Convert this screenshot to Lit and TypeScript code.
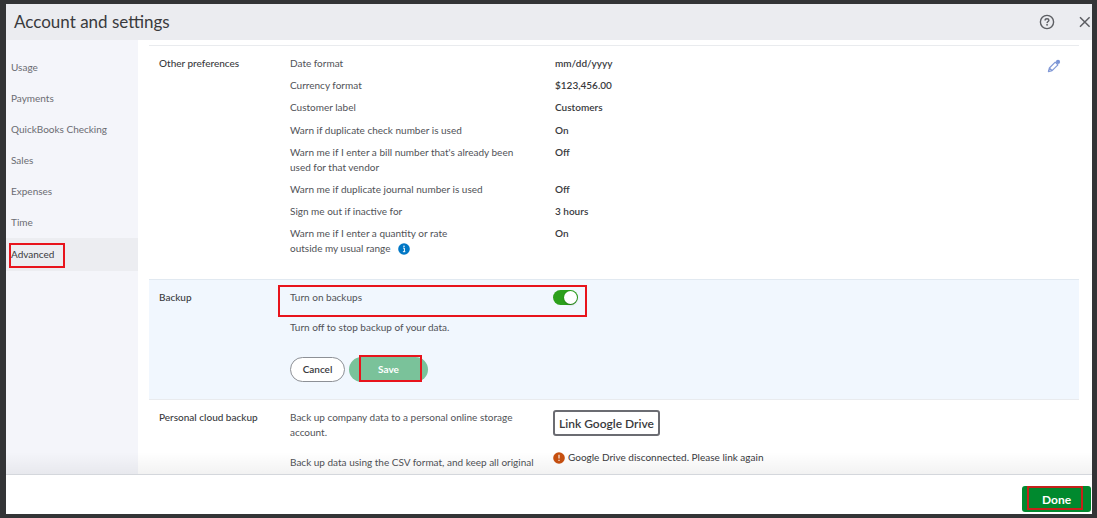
import { LitElement, html, css } from "lit";
import { customElement, property, state } from "lit/decorators.js";

interface Preference {
  label: string;
  value: string;
  narrow?: boolean;
  info?: boolean;
}

const formats: Preference[] = [
  { label: "Date format", value: "mm/dd/yyyy" },
  { label: "Currency format", value: "$123,456.00" },
  { label: "Customer label", value: "Customers" },
];

const warnings: Preference[] = [
  { label: "Warn if duplicate check number is used", value: "On" },
  { label: "Warn me if I enter a bill number that's already been used for that vendor", value: "Off" },
  { label: "Warn me if duplicate journal number is used", value: "Off" },
  { label: "Sign me out if inactive for", value: "3 hours" },
  { label: "Warn me if I enter a quantity or rate outside my usual range", value: "On", narrow: true, info: true },
];

const pages = ["Usage", "Payments", "QuickBooks Checking", "Sales", "Expenses", "Time", "Advanced"];

@customElement("settings-section")
export class SettingsSection extends LitElement {
  @property() heading = "";
  @property({ type: Boolean, reflect: true }) active = false;

  static styles = css`
    :host {
      display: grid;
      grid-template-columns: 131px minmax(0, 1fr);
      padding: 10px;
      border-top: 1px solid #e9ebee;
    }
    :host([active]) {
      background: #f1f7fe;
      border-color: #e1e9f1;
    }
    h2 {
      margin: 0;
      font-size: 10px;
      line-height: 15px;
      font-weight: 500;
      color: #393a3d;
    }
  `;

  render() {
    return html`<h2>${this.heading}</h2><div><slot></slot></div>`;
  }
}

@customElement("app-root")
export class AppRoot extends LitElement {
  @state() private current = "Advanced";
  @state() private backups = true;

  static styles = css`
    :host {
      display: flex;
      flex-direction: column;
      box-sizing: border-box;
      height: 100vh;
      border: solid #333436;
      border-width: 4px 5px 4px 6px;
      background: #fff;
      color: #505257;
      font: 10px/15px Lato, "Liberation Sans", sans-serif;
      overflow: hidden;
    }
    button {
      font: inherit;
      cursor: pointer;
      padding: 0;
      border: 0;
      background: none;
      color: inherit;
    }
    svg {
      display: block;
    }
    header {
      display: flex;
      align-items: center;
      flex: none;
      height: 36px;
      padding: 0 1px 0 8px;
      background: #ebecf0;
      color: #393a3d;
    }
    h1 {
      margin: 0 auto 0 0;
      font-size: 17px;
      line-height: 24px;
      font-weight: 400;
    }
    .tools {
      display: flex;
      gap: 24px;
      color: #5c5e63;
    }
    .body {
      display: flex;
      flex: 1;
      min-height: 0;
    }
    nav {
      flex: none;
      width: 132px;
      box-sizing: border-box;
      padding-top: 12px;
      background: #f4f5fa;
    }
    nav a {
      display: block;
      padding: 8px 5px;
      color: #6b6c72;
      text-decoration: none;
    }
    nav a.current {
      padding: 9px 5px;
      background: #ecedf1;
      color: #393a3d;
    }
    .marked {
      position: relative;
    }
    nav .marked {
      display: inline-block;
      vertical-align: top;
    }
    .mark {
      position: absolute;
      border: 2px solid #e8141c;
      pointer-events: none;
    }
    .mark-nav {
      inset: -4px -11px -6px -2px;
    }
    .mark-toggle {
      inset: -5px -9px -12px -12px;
    }
    .mark-save {
      inset: -2px 6px 0 10px;
    }
    .mark-done {
      inset: 0 8px 2px 5px;
      border-color: #c5221a;
    }
    main {
      flex: 1;
      min-width: 0;
      padding: 5px 13px 0 11px;
      overflow: hidden;
    }
    .prefs {
      display: flex;
      align-items: flex-start;
      min-height: 213px;
    }
    dl {
      flex: 1;
      margin: 0;
    }
    .group {
      display: grid;
      gap: 7px;
      margin-bottom: 8px;
    }
    .pref {
      display: grid;
      grid-template-columns: 234px minmax(0, 1fr);
      column-gap: 31px;
    }
    dt.narrow {
      padding-right: 60px;
    }
    dd {
      margin: 0;
      font-weight: 600;
      color: #393a3d;
    }
    .info {
      display: inline-block;
      vertical-align: -3px;
      margin-left: 5px;
    }
    .edit {
      margin: 3px 8px 0 0;
    }
    .toggle-row {
      display: flex;
      align-items: center;
      justify-content: space-between;
      width: 288px;
    }
    .switch {
      appearance: none;
      display: flex;
      width: 25px;
      height: 15px;
      box-sizing: border-box;
      margin: 0;
      padding: 1px;
      border-radius: 8px;
      background: #8d9096;
      cursor: pointer;
    }
    .switch::before {
      content: "";
      width: 13px;
      height: 13px;
      border-radius: 50%;
      background: #fff;
      box-shadow: 0 1px 2px #0004;
    }
    .switch:checked {
      background: #2ca01c;
      justify-content: flex-end;
    }
    p {
      margin: 15px 0 0;
    }
    .actions {
      display: flex;
      gap: 4px;
      margin: 22px 0 7px;
    }
    .pill {
      height: 25px;
      border-radius: 13px;
      font-weight: 600;
    }
    .cancel {
      width: 55px;
      border: 1px solid #8d9096;
      background: #fff;
      color: #393a3d;
    }
    .save {
      width: 79px;
      background: #7ac29a;
      color: #fff;
      font-weight: 700;
    }
    .cloud {
      display: grid;
      grid-template-columns: 250px minmax(0, 1fr);
      column-gap: 13px;
    }
    .cloud p:first-child {
      margin: 0;
    }
    .link {
      height: 26px;
      padding: 0 4px;
      border: 2px solid #6b6c72;
      border-radius: 3px;
      background: #fff;
      color: #393a3d;
      font-size: 12px;
      font-weight: 600;
    }
    .error {
      display: flex;
      align-items: center;
      gap: 3px;
      margin-top: 14px;
      color: #393a3d;
    }
    footer {
      position: relative;
      display: flex;
      justify-content: flex-end;
      flex: none;
      padding: 11px 1px 2px 0;
      border-top: 1px solid #d4d7dc;
      background: #fff;
    }
    footer::before {
      content: "";
      position: absolute;
      inset: -23px 0 auto 0;
      height: 22px;
      background: linear-gradient(#0000, #0000000d);
      pointer-events: none;
    }
    .done {
      width: 69px;
      height: 26px;
      border-radius: 3px;
      background: #00892e;
      color: #fff;
      font-size: 12px;
      font-weight: 700;
    }
  `;

  private infoIcon() {
    return html`<svg class="info" width="12" height="12" viewBox="0 0 12 12" role="img" aria-label="More information">
      <circle cx="6" cy="6" r="5.8" fill="#0077c5" />
      <path d="M5.1 5.1h1.3v3.5M4.9 8.7h2.4" fill="none" stroke="#fff" stroke-width="1" />
      <circle cx="6" cy="3.2" r=".8" fill="#fff" />
    </svg>`;
  }

  private preference(p: Preference) {
    return html`<div class="pref">
      <dt class=${p.narrow ? "narrow" : ""}>${p.label} ${p.info ? this.infoIcon() : ""}</dt>
      <dd>${p.value}</dd>
    </div>`;
  }

  render() {
    return html`
      <header>
        <h1>Account and settings</h1>
        <div class="tools">
          <button aria-label="Help">
            <svg width="16" height="16" viewBox="0 0 16 16" fill="none" stroke="currentColor" stroke-width="1.4">
              <circle cx="8" cy="8" r="6.6" />
              <path d="M6.1 6.4c0-1.1.8-1.7 1.9-1.7s1.9.6 1.9 1.6c0 1.3-1.8 1.2-1.8 2.6" />
              <circle cx="8.1" cy="10.8" r=".3" />
            </svg>
          </button>
          <button aria-label="Close">
            <svg width="12" height="16" viewBox="0 0 12 16" fill="none" stroke="currentColor" stroke-width="1.5">
              <path d="M1 3.2l9.6 9.6M10.6 3.2L1 12.8" />
            </svg>
          </button>
        </div>
      </header>
      <div class="body">
        <nav aria-label="Settings">
          ${pages.map(
            (page) => html`<a
              href="#"
              class=${page === this.current ? "current" : ""}
              @click=${(e: Event) => {
                e.preventDefault();
                this.current = page;
              }}
              ><span class="marked">${page}${page === "Advanced" ? html`<i class="mark mark-nav"></i>` : ""}</span></a
            >`
          )}
        </nav>
        <main>
          <settings-section heading="Other preferences">
            <div class="prefs">
              <dl>
                <div class="group">${formats.map((p) => this.preference(p))}</div>
                <div class="group">${warnings.map((p) => this.preference(p))}</div>
              </dl>
              <button class="edit" aria-label="Edit other preferences">
                <svg width="14" height="14" viewBox="0 0 14 14" fill="none" stroke="#8299d6" stroke-width="1.2" stroke-linejoin="round">
                  <path d="M1.4 12.6l1-3.6 5.8-5.9 2.7 2.7-5.8 5.8zM2.6 9.2l2.4 2.3" />
                  <circle cx="11" cy="2.9" r="2.1" fill="#7b95d6" stroke="none" />
                </svg>
              </button>
            </div>
          </settings-section>
          <settings-section heading="Backup" active>
            <div class="toggle-row marked">
              <label for="backups">Turn on backups</label>
              <input
                id="backups"
                class="switch"
                type="checkbox"
                role="switch"
                .checked=${this.backups}
                @change=${(e: Event) => (this.backups = (e.target as HTMLInputElement).checked)}
              />
              <i class="mark mark-toggle"></i>
            </div>
            <p>Turn off to stop backup of your data.</p>
            <div class="actions">
              <button class="pill cancel">Cancel</button>
              <button class="pill save marked">Save<i class="mark mark-save"></i></button>
            </div>
          </settings-section>
          <settings-section heading="Personal cloud backup">
            <div class="cloud">
              <div>
                <p>Back up company data to a personal online storage account.</p>
                <p>Back up data using the CSV format, and keep all original</p>
              </div>
              <div>
                <button class="link">Link Google Drive</button>
                <div class="error" role="status">
                  <svg width="12" height="12" viewBox="0 0 12 12" aria-hidden="true">
                    <circle cx="6" cy="6" r="5.8" fill="#c8500f" />
                    <path d="M6 2.8v3.8M6 7.8v1.2" stroke="#fff" stroke-width="1.1" />
                  </svg>
                  <span>Google Drive disconnected. Please link again</span>
                </div>
              </div>
            </div>
          </settings-section>
        </main>
      </div>
      <footer>
        <button class="done marked">Done<i class="mark mark-done"></i></button>
      </footer>
    `;
  }
}
